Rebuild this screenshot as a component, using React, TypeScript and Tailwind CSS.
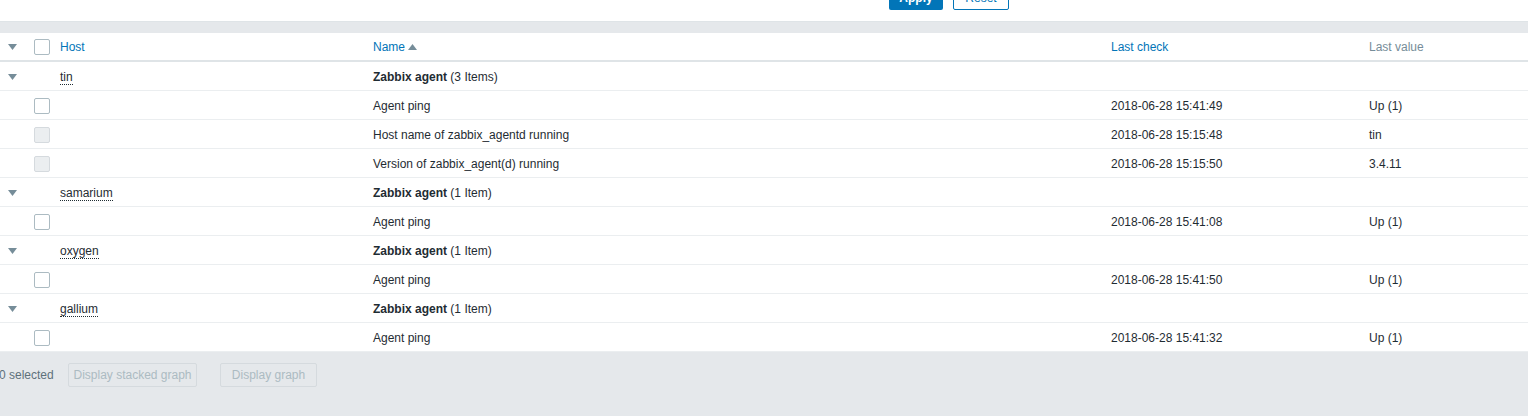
import React from 'react'

type Item = { name: string; check: string; value: string; disabled?: boolean }
type Group = { host: string; items: Item[] }

const groups: Group[] = [
  {
    host: 'tin',
    items: [
      { name: 'Agent ping', check: '2018-06-28 15:41:49', value: 'Up (1)' },
      { name: 'Host name of zabbix_agentd running', check: '2018-06-28 15:15:48', value: 'tin', disabled: true },
      { name: 'Version of zabbix_agent(d) running', check: '2018-06-28 15:15:50', value: '3.4.11', disabled: true },
    ],
  },
  { host: 'samarium', items: [{ name: 'Agent ping', check: '2018-06-28 15:41:08', value: 'Up (1)' }] },
  { host: 'oxygen', items: [{ name: 'Agent ping', check: '2018-06-28 15:41:50', value: 'Up (1)' }] },
  { host: 'gallium', items: [{ name: 'Agent ping', check: '2018-06-28 15:41:32', value: 'Up (1)' }] },
]

function Arrow() {
  return (
    <svg width="9" height="6" viewBox="0 0 9 6" className="block">
      <path d="M0 0 L9 0 L4.5 6 Z" fill="#768d99" />
    </svg>
  )
}

function Checkbox({ disabled }: { disabled?: boolean }) {
  return (
    <span
      className={`block w-4 h-4 rounded-[2px] border ${
        disabled ? 'bg-[#ebeef0] border-[#d5dade]' : 'bg-white border-[#acbbc2]'
      }`}
    />
  )
}

const row = 'flex items-center h-[29px] pt-px border-b border-[#ebeef0]'

export default function App() {
  return (
    <div className="w-[1528px] h-[416px] overflow-hidden bg-[#e5e8eb] text-[12px] text-[#1f2c33] font-['Liberation_Sans',Arial,sans-serif]">
      {/* filter buttons, cut off at top */}
      <div className="h-[21px] bg-white flex items-end overflow-hidden">
        <div className="flex gap-[10px] ml-[889px] mb-[11px]">
          <button className="h-6 w-[54px] rounded-[2px] bg-[#0275b8] text-white font-bold">Apply</button>
          <button className="h-6 w-[56px] rounded-[2px] border border-[#0275b8] bg-white text-[#0275b8]">Reset</button>
        </div>
      </div>
      <div className="h-3 border-t border-[#dfe4e7] bg-[#e5e8eb]" />

      <div className="bg-white">
        {/* header */}
        <div className="flex items-center h-[29px] pt-px border-b-2 border-[#dfe4e7]">
          <div className="w-[34px] pl-2"><Arrow /></div>
          <div className="w-[26px]"><Checkbox /></div>
          <div className="w-[313px] text-[#0275b8]">Host</div>
          <div className="w-[738px] text-[#0275b8] flex items-center gap-[3px]">
            Name
            <svg width="9" height="6" viewBox="0 0 9 6"><path d="M0 6 L9 6 L4.5 0 Z" fill="#768d99" /></svg>
          </div>
          <div className="w-[258px] text-[#0275b8]">Last check</div>
          <div className="text-[#768d99]">Last value</div>
        </div>

        {groups.map((g) => (
          <React.Fragment key={g.host}>
            <div className={row}>
              <div className="w-[34px] pl-2"><Arrow /></div>
              <div className="w-[26px]" />
              <div className="w-[313px]">
                <span className="border-b border-dotted border-[#1f2c33] leading-[13px] inline-block">{g.host}</span>
              </div>
              <div className="w-[738px]">
                <span className="font-bold">Zabbix agent</span> ({g.items.length} {g.items.length === 1 ? 'Item' : 'Items'})
              </div>
            </div>
            {g.items.map((it) => (
              <div key={it.name} className={row}>
                <div className="w-[34px]" />
                <div className="w-[26px]"><Checkbox disabled={it.disabled} /></div>
                <div className="w-[313px]" />
                <div className="w-[738px]">{it.name}</div>
                <div className="w-[258px]">{it.check}</div>
                <div>{it.value}</div>
              </div>
            ))}
          </React.Fragment>
        ))}
      </div>

      {/* footer */}
      <div className="flex items-center pt-[11px] -ml-[1px] whitespace-nowrap">
        <span className="text-[#5e717b] w-[69px]">0 selected</span>
        <button disabled className="h-[24px] w-[129px] rounded-[2px] border border-[#d5dade] bg-[#e5e8eb] text-[#acbbc2] whitespace-nowrap">
          Display stacked graph
        </button>
        <button disabled className="h-[24px] w-[97px] ml-[23px] rounded-[2px] border border-[#d5dade] bg-[#e5e8eb] text-[#acbbc2] whitespace-nowrap">
          Display graph
        </button>
      </div>
    </div>
  )
}
